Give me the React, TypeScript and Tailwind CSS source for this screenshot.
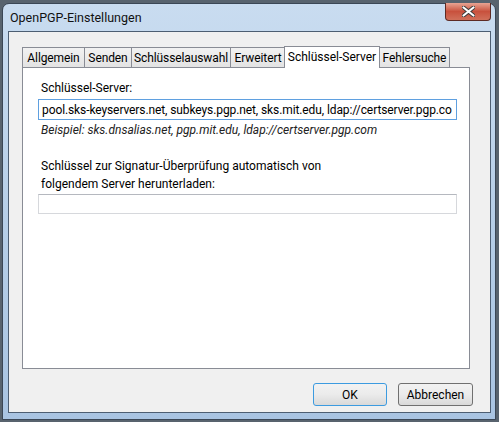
const tabs = [
  { label: "Allgemein", w: "w-[62px]" },
  { label: "Senden", w: "w-[47px]" },
  { label: "Schlüsselauswahl", w: "w-[99px]" },
  { label: "Erweitert", w: "w-[55px]" },
  { label: "Schlüssel-Server", w: "w-[96px]", active: true },
  { label: "Fehlersuche", w: "w-[71px]" },
];

export default function App() {
  return (
    <div
      className="w-[499px] h-[422px] bg-[#58636e] overflow-hidden text-black"
      style={{ fontFamily: 'Roboto, "Open Sans", sans-serif' }}
    >
      {/* window frame */}
      <div className="ml-[2px] mt-[3px] w-[494px] h-[417px] rounded-t-[7px] border border-[#3b4756] bg-gradient-to-b from-[#c9dcf0] via-[#b7cfe8] to-[#a9c4e2] flex flex-col">
        {/* title bar */}
        <div className="h-[27px] flex items-start justify-between pl-[7px] pr-[4px]">
          <span className="text-[12.5px] leading-none pt-[8px] text-[#111]">
            OpenPGP-Einstellungen
          </span>
          <button className="w-[46px] h-[18px] -mt-px rounded-b-[4px] border border-[#5d2a24] border-t-0 bg-gradient-to-b from-[#e8a493] via-[#c8513d] to-[#d0705a] flex items-center justify-center">
            <svg width="13" height="11" viewBox="0 0 13 11">
              <path
                d="M1.5 1.5 L11.5 9.5 M11.5 1.5 L1.5 9.5"
                stroke="#3a3a3a"
                strokeWidth="4"
                strokeLinecap="round"
              />
              <path
                d="M1.5 1.5 L11.5 9.5 M11.5 1.5 L1.5 9.5"
                stroke="#ffffff"
                strokeWidth="2.2"
                strokeLinecap="round"
              />
            </svg>
          </button>
        </div>

        {/* client area */}
        <div className="ml-[5px] mr-[4px] h-[382px] border border-[#4d5e72] bg-[#f0f0f0] flex flex-col pl-[13px] pr-[18px] pt-[14px] text-[12px]">
          {/* tabs */}
          <div className="flex items-end h-[21px] relative z-10">
            {tabs.map((t) =>
              t.active ? (
                <div
                  key={t.label}
                  className={`${t.w} -mx-[1px] h-[22px] -mb-[1px] border border-b-0 border-[#898c95] bg-white flex items-center justify-center leading-none pb-[2px]`}
                >
                  {t.label}
                </div>
              ) : (
                <div
                  key={t.label}
                  className={`${t.w} h-[20px] border border-b-0 border-r-0 last:border-r border-[#898c95] bg-gradient-to-b from-[#f2f2f2] to-[#e3e3e3] flex items-center justify-center leading-none tracking-[-0.1px]`}
                >
                  {t.label}
                </div>
              )
            )}
          </div>

          {/* panel */}
          <div className="w-[448px] h-[302px] border border-[#898c95] bg-white pl-[15px] pr-[12px] pt-[12px]">
            <div className="pl-[3px] leading-[16px]">Schlüssel-Server:</div>
            <div className="mt-[3px] h-[21px] border border-[#5fa0e0] flex items-center pl-[3px] overflow-hidden whitespace-nowrap tracking-[-0.1px]">
              pool.sks-keyservers.net, subkeys.pgp.net, sks.mit.edu,
              ldap://certserver.pgp.co
            </div>
            <div className="pl-[3px] mt-[2px] italic text-[#222] leading-[16px]">
              Beispiel: sks.dnsalias.net, pgp.mit.edu, ldap://certserver.pgp.com
            </div>
            <div className="pl-[3px] mt-[19px] leading-[18px]">
              Schlüssel zur Signatur-Überprüfung automatisch von
              <br />
              folgendem Server herunterladen:
            </div>
            <div className="mt-[1px] h-[20px] border border-[#d6d8dc] border-t-[#b5b8bf]" />
          </div>

          {/* buttons */}
          <div className="flex justify-end gap-[11px] mt-[14px] -mr-[1px]">
            <button className="w-[74px] h-[23px] rounded-[3px] border border-[#3c9be0] bg-gradient-to-b from-[#f2f2f2] via-[#ebebeb] to-[#d9d9d9] leading-none">
              OK
            </button>
            <button className="w-[75px] h-[23px] rounded-[3px] border border-[#707070] bg-gradient-to-b from-[#f2f2f2] via-[#ebebeb] to-[#d9d9d9] leading-none">
              Abbrechen
            </button>
          </div>
        </div>
      </div>
    </div>
  );
}
